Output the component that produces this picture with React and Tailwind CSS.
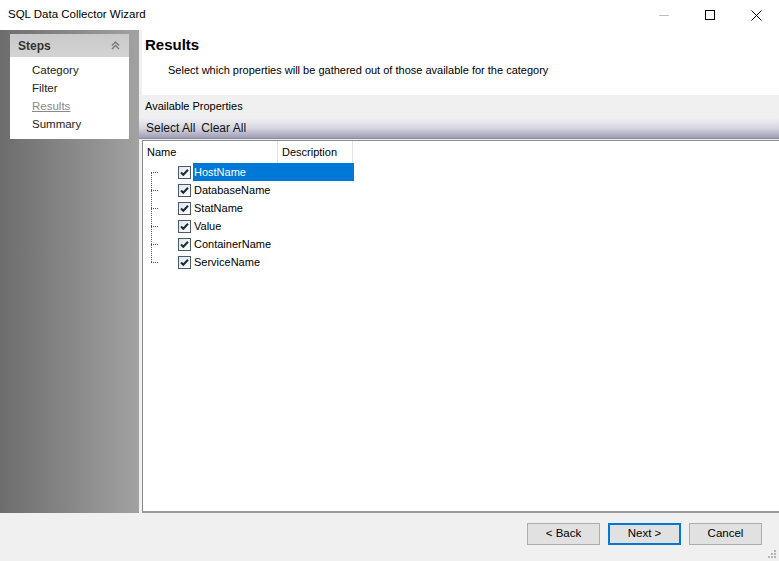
import React from 'react';

const FONT = { fontFamily: '"Liberation Sans", Arial, sans-serif' };

const STEPS = [
  { label: 'Category', active: false },
  { label: 'Filter', active: false },
  { label: 'Results', active: true },
  { label: 'Summary', active: false },
];

const FIELDS = ['HostName', 'DatabaseName', 'StatName', 'Value', 'ContainerName', 'ServiceName'];

const CheckBox = () => (
  <span className="w-[13px] h-[13px] border border-[#4a5a6a] bg-gradient-to-br from-[#dfe6ee] to-white flex items-center justify-center shrink-0">
    <svg width="11" height="11" viewBox="0 0 11 11">
      <path d="M2 5.5 L4.3 7.8 L9 2.8" fill="none" stroke="#1e2a36" strokeWidth="2" />
    </svg>
  </span>
);

export default function App() {
  return (
    <div className="w-[779px] h-[561px] bg-[#f0f0f0] flex flex-col overflow-hidden text-[11px] text-black" style={FONT}>
      {/* title bar */}
      <div className="h-[30px] bg-white flex items-center shrink-0">
        <span className="pl-[8px] text-[11.5px] flex-1">SQL Data Collector Wizard</span>
        <div className="flex h-full">
          <div className="w-[46px] flex items-center justify-center">
            <div className="w-[10px] h-px bg-[#bdbdbd]" />
          </div>
          <div className="w-[46px] flex items-center justify-center">
            <div className="w-[10px] h-[10px] border border-black" />
          </div>
          <div className="w-[46px] flex items-center justify-center">
            <svg width="11" height="11" viewBox="0 0 11 11">
              <path d="M0.5 0.5 L10.5 10.5 M10.5 0.5 L0.5 10.5" stroke="#000" strokeWidth="1" />
            </svg>
          </div>
        </div>
      </div>

      <div className="flex flex-1 min-h-0">
        {/* steps sidebar */}
        <div className="w-[139px] bg-gradient-to-r from-[#6d6d6d] to-[#a2a2a2] pt-[4px] pl-[10px]">
          <div className="w-[119px] bg-white">
            <div className="h-[23px] bg-gradient-to-b from-[#c9c9c9] to-[#d4d4d4] flex items-center justify-between pl-[8px] pr-[9px]">
              <span className="font-bold text-[#333] text-[12px]">Steps</span>
              <svg width="9" height="9" viewBox="0 0 9 9">
                <path d="M1 4.5 L4.5 1 L8 4.5 M1 8 L4.5 4.5 L8 8" fill="none" stroke="#777" strokeWidth="1.3" />
              </svg>
            </div>
            <ul className="pt-[4px] pb-[6px] pl-[22px] text-[11.5px] text-[#222]">
              {STEPS.map((s) => (
                <li key={s.label} className={`h-[18px] leading-[18px] ${s.active ? 'text-[#888] underline' : ''}`}>
                  {s.label}
                </li>
              ))}
            </ul>
          </div>
        </div>

        {/* content */}
        <div className="flex-1 flex flex-col min-w-0 border-l-[3px] border-[#f0f0f0]">
          <div className="h-[65px] bg-white shrink-0 pl-[3px]">
            <div className="pt-[4px] text-[15px] font-bold">Results</div>
            <div className="pl-[23px] pt-[5px] text-[11px]">
              Select which properties will be gathered out of those available for the category
            </div>
          </div>
          <div className="h-[23px] bg-[#f0f0f0] flex items-center -ml-[3px] pl-[6px] text-[11px] shrink-0">
            Available Properties
          </div>
          <div className="h-[21px] -ml-[3px] pl-[7px] flex items-center gap-[6px] text-[12px] text-[#111] bg-gradient-to-b from-[#f0f0f2] via-[#d6d6e2] to-[#9e9eb4] border-b border-[#8a8a9c] shrink-0">
            <span>Select All</span>
            <span>Clear All</span>
          </div>
          <div className="flex-1 bg-white border-l border-t border-[#8a8a8a] border-b-[2px] border-b-[#9a9a9a] mt-[1px] min-h-0 relative">
            {/* header */}
            <div className="flex h-[22px] text-[11px]">
              <div className="w-[135px] border-r border-[#e2e2e2] pl-[4px] flex items-center">Name</div>
              <div className="w-[75px] border-r border-[#e2e2e2] pl-[4px] flex items-center">Description</div>
            </div>
            {/* rows */}
            <div className="relative">
              <div className="absolute left-[8px] top-[9px] h-[90px] border-l border-dotted border-[#555]" />
              {FIELDS.map((f, i) => (
                <div key={f} className="h-[18px] flex items-center">
                  <div className="w-[8px]" />
                  <div className="w-[7px] mr-[20px] border-t border-dotted border-[#555]" />
                  <CheckBox />
                  <span
                    className={`ml-[2px] h-[18px] leading-[18px] pl-[1px] text-[11px] ${i === 0 ? 'bg-[#0078d7] text-white w-[161px]' : ''}`}
                  >
                    {f}
                  </span>
                </div>
              ))}
            </div>
          </div>
        </div>
      </div>

      {/* footer */}
      <div className="h-[48px] shrink-0 flex items-start justify-end pt-[10px] pr-[17px] gap-[8px] relative">
        <button className="w-[73px] h-[22px] bg-[#e1e1e1] border border-[#adadad] text-[11.5px]">&lt; Back</button>
        <button className="w-[73px] h-[22px] bg-[#e1e1e1] border-2 border-[#0078d7] text-[11.5px]">Next &gt;</button>
        <button className="w-[73px] h-[22px] bg-[#e1e1e1] border border-[#adadad] text-[11.5px]">Cancel</button>
        <svg className="absolute right-[2px] bottom-[2px]" width="10" height="10" viewBox="0 0 10 10">
          <g fill="#b5b5b5">
            <rect x="7" y="1" width="2" height="2" />
            <rect x="4" y="4" width="2" height="2" />
            <rect x="7" y="4" width="2" height="2" />
            <rect x="1" y="7" width="2" height="2" />
            <rect x="4" y="7" width="2" height="2" />
            <rect x="7" y="7" width="2" height="2" />
          </g>
        </svg>
      </div>
    </div>
  );
}
